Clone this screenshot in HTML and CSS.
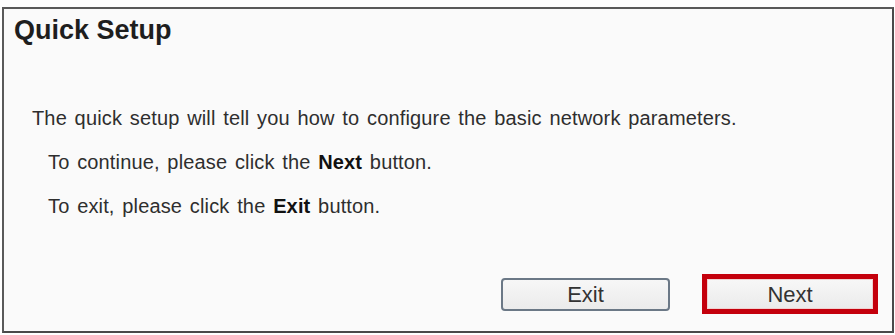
FILE: index.html
```html
<!DOCTYPE html>
<html>
<head>
<meta charset="utf-8">
<link rel="stylesheet" href="styles.css">
</head>
<body>
<div class="panel">
  <h1 class="title">Quick Setup</h1>
  <p class="intro">The quick setup will tell you how to configure the basic network parameters.</p>
  <p class="line">To continue, please click the <b>Next</b> button.</p>
  <p class="line">To exit, please click the <b>Exit</b> button.</p>
  <div class="actions">
    <button class="btn exit">Exit</button>
    <span class="focus"><button class="btn next">Next</button></span>
  </div>
</div>
</body>
</html>
```
FILE: styles.css
```css
html, body {
  margin: 0;
  padding: 0;
  background: #ffffff;
}
body {
  padding: 7px 1px 0 2px;
  font-family: "Liberation Sans", Arial, sans-serif;
  color: #2e2e2e;
}
.panel {
  box-sizing: border-box;
  width: 892px;
  height: 326px;
  border: 2px solid #5a5a5a;
  border-right-color: #4a4a4a;
  border-bottom-color: #4a4a4a;
  background: #fafafa;
  padding: 0;
}
.title {
  margin: 0;
  padding: 5px 0 0 10px;
  font-size: 27px;
  line-height: 32px;
  font-weight: bold;
  color: #1e1e1e;
}
.intro {
  margin: 0;
  padding: 62px 0 0 28px;
  font-size: 20px;
  line-height: 20px;
  letter-spacing: 0.15px;
  word-spacing: 2px;
}
.line {
  margin: 0;
  padding: 24px 0 0 44px;
  font-size: 20px;
  line-height: 20px;
  letter-spacing: 0.15px;
  word-spacing: 2px;
}
.line b {
  color: #111;
}
.actions {
  display: flex;
  align-items: center;
  padding: 58px 0 0 497px;
}
.btn {
  font-family: "Liberation Sans", Arial, sans-serif;
  font-size: 22px;
  color: #333;
  background: linear-gradient(#f7f7f7, #ebebeb);
  margin: 0;
  padding: 2px 0 0 0;
}
.exit {
  width: 169px;
  height: 33px;
  border: 2px solid #6b7886;
  border-radius: 4px;
}
.focus {
  margin-left: 32px;
  display: block;
  border: 5px solid #c4000c;
  width: 166px;
  height: 30px;
}
.next {
  display: block;
  width: 166px;
  height: 30px;
  border: 1px solid #f0d0d0;
}
```
